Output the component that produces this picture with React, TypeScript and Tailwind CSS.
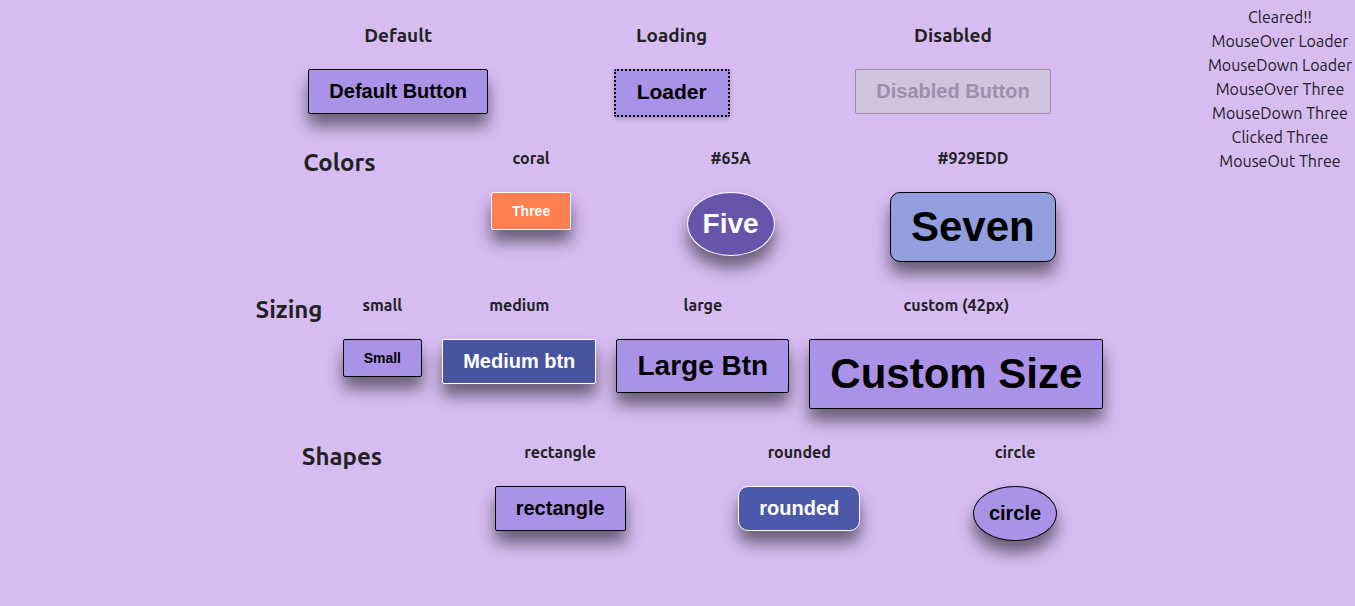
import { useId, type ReactNode } from "react";
import clsx from "clsx";

type Size = "small" | "medium" | "large" | "custom";
type Shape = "rectangle" | "rounded" | "circle";

const sizes: Record<Size, string> = {
  small: "text-[14px] leading-[16px]",
  medium: "text-[20px] leading-[23px]",
  large: "text-[28px] leading-[32px]",
  custom: "text-[42px] leading-[48px]",
};

const shapes: Record<Shape, string> = {
  rectangle: "rounded-[2px] px-5 py-[10px]",
  rounded: "rounded-[10px] px-5 py-[10px]",
  circle: "rounded-[50%] p-[15px]",
};

const shadow = "shadow-[0_12px_16px_rgba(0,0,0,0.5)]";
const base = "font-['Liberation_Sans',Arial,sans-serif] font-bold whitespace-nowrap";

type ButtonProps = {
  children: ReactNode;
  size?: Size;
  shape?: Shape;
  tone?: string;
  describedBy?: string;
};

function Button({ children, size = "medium", shape = "rectangle", tone = "border-black bg-[#aa92e8] text-black", describedBy }: ButtonProps) {
  return (
    <button type="button" aria-describedby={describedBy} className={clsx(base, "border", shadow, sizes[size], shapes[shape], tone)}>
      {children}
    </button>
  );
}

function Sample({ label, ...button }: ButtonProps & { label: string }) {
  const id = useId();
  return (
    <div className="flex flex-col items-center gap-[21px]">
      <h4 id={id} className="text-[16px] leading-[26px] font-bold whitespace-nowrap">{label}</h4>
      <Button {...button} describedBy={id} />
    </div>
  );
}

function State({ label, children }: { label: string; children: ReactNode }) {
  return (
    <div className="flex flex-col items-center gap-5">
      <h3 className="text-[19px] leading-[28px] font-bold">{label}</h3>
      {children}
    </div>
  );
}

function Row({ title, children }: { title: string; children: ReactNode }) {
  return (
    <section className="flex items-start justify-around">
      <h2 className="text-[24px] leading-[36px] font-bold">{title}</h2>
      {children}
    </section>
  );
}

const events = [
  "Cleared!!",
  "MouseOver Loader",
  "MouseDown Loader",
  "MouseOver Three",
  "MouseDown Three",
  "Clicked Three",
  "MouseOut Three",
];

export default function App() {
  return (
    <div className="grid min-h-screen grid-cols-[1fr_minmax(0,868px)_1fr] items-start bg-[#d7bcf2] pl-1 font-[Ubuntu,'Noto_Sans',sans-serif] text-[#222222]">
      <main className="col-start-2 flex flex-col gap-[30px] pt-[21px]">
        <section className="-mb-[2px] flex items-start justify-around">
          <State label="Default">
            <Button>Default Button</Button>
          </State>
          <State label="Loading">
            <button type="button" aria-busy="true" className={clsx(base, "rounded-[2px] border-2 border-dotted border-black bg-[#aa92e8] px-[21px] pt-[9px] pb-[11px] text-[21px] leading-[24px] text-black shadow-[0_2px_5px_rgba(0,0,0,0.2)]")}>
              Loader
            </button>
          </State>
          <State label="Disabled">
            <button type="button" disabled className={clsx(base, "rounded-[2px] border border-[#9d8eac] bg-[#d1c3de] px-5 py-[10px] text-[20px] leading-[23px] text-[#9d8eac]")}>
              Disabled Button
            </button>
          </State>
        </section>

        <Row title="Colors">
          <Sample label="coral" size="small" tone="border-white bg-[#ff7f50] text-white">Three</Sample>
          <Sample label="#65A" size="large" shape="circle" tone="border-white bg-[#6655aa] text-white">Five</Sample>
          <Sample label="#929EDD" size="custom" shape="rounded" tone="border-black bg-[#929edd] text-black">Seven</Sample>
        </Row>

        <Row title="Sizing">
          <Sample label="small" size="small">Small</Sample>
          <Sample label="medium" tone="border-white bg-[#4854a0] text-white">Medium btn</Sample>
          <Sample label="large" size="large">Large Btn</Sample>
          <Sample label="custom (42px)" size="custom">Custom Size</Sample>
        </Row>

        <Row title="Shapes">
          <Sample label="rectangle">rectangle</Sample>
          <Sample label="rounded" shape="rounded" tone="border-white bg-[#4c59aa] text-white">rounded</Sample>
          <Sample label="circle" shape="circle">circle</Sample>
        </Row>
      </main>

      <ul className="justify-self-end pt-[5px] pr-[3px] text-center text-[16px] leading-[24px] whitespace-nowrap">
        {events.map((event) => (
          <li key={event}>{event}</li>
        ))}
      </ul>
    </div>
  );
}
